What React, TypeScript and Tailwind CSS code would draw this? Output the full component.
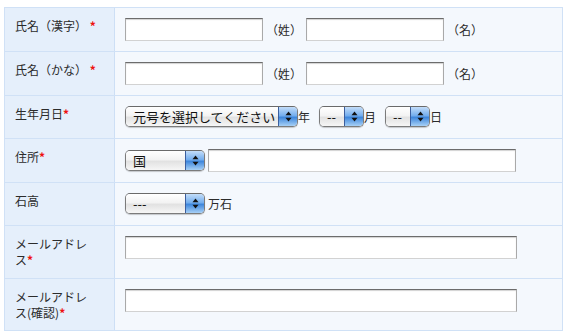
import type { ReactNode } from "react"

function Req() {
  return <span className="font-bold text-[#ee1111]">*</span>
}

function TextBox({ w }: { w: string }) {
  return (
    <input
      type="text"
      className={`${w} h-[23px] border border-[#a9a9a9] border-t-[#6c6c6c] border-b-[#d2d2d2] bg-white shadow-[inset_0_1px_1px_rgba(0,0,0,0.18)] outline-none`}
    />
  )
}

function MacSelect({ text, w }: { text: string; w: string }) {
  return (
    <div
      className={`${w} h-[21px] flex rounded-[5px] border border-[#7b7b7b] border-t-[#6a6a6a] overflow-hidden shadow-[0_1px_1px_rgba(0,0,0,0.2)]`}
    >
      <div className="flex-1 flex items-center pl-[7px] text-[13px] leading-none text-[#111] whitespace-nowrap overflow-hidden bg-[linear-gradient(to_bottom,#ffffff_0%,#f3f3f3_45%,#e2e2e2_55%,#f6f6f6_100%)]">
        {text}
      </div>
      <div className="w-[19px] shrink-0 flex items-center justify-center border-l border-[#3b5e9e] bg-[linear-gradient(to_bottom,#c3ddf9_0%,#74aeee_45%,#3f87dc_55%,#a7d0f6_100%)]">
        <svg width="7" height="11" viewBox="0 0 7 11">
          <path d="M3.5 0.5 L6.5 4.2 L0.5 4.2 Z" fill="#111" />
          <path d="M0.5 6.8 L6.5 6.8 L3.5 10.5 Z" fill="#111" />
        </svg>
      </div>
    </div>
  )
}

function Row({ label, h, children }: { label: ReactNode; h: string; children?: ReactNode }) {
  return (
    <div className={`${h} flex border-b border-[#d0e1f6]`}>
      <div className="w-[110px] shrink-0 bg-[#e5effb] border-r border-[#cddff5] pl-[10px] pt-[10px] text-[12px] leading-[16px] text-[#2b2b2b] whitespace-nowrap">
        {label}
      </div>
      <div className="flex-1 bg-[#f4f8fd] pl-[10px] pt-[10px]">
        <div className="flex items-center text-[12px] text-[#2b2b2b]">{children}</div>
      </div>
    </div>
  )
}

export default function App() {
  return (
    <div className="w-[568px] h-[336px] bg-white pt-[7px] pl-[4px] font-['Noto_Sans_CJK_JP',sans-serif]">
      <div className="w-[559px] border-t border-l border-r border-[#d0e1f6]">
        <Row h="h-[44px]" label={<>氏名（漢字） <Req /></>}>
          <TextBox w="w-[138px]" />
          <span className="ml-[3px] w-[40px]">（姓）</span>
          <TextBox w="w-[138px]" />
          <span className="ml-[3px]">（名）</span>
        </Row>
        <Row h="h-[44px]" label={<>氏名（かな） <Req /></>}>
          <TextBox w="w-[138px]" />
          <span className="ml-[3px] w-[40px]">（姓）</span>
          <TextBox w="w-[138px]" />
          <span className="ml-[3px]">（名）</span>
        </Row>
        <Row h="h-[43px]" label={<>生年月日<Req /></>}>
          <MacSelect text="元号を選択してください" w="w-[173px]" />
          <span className="w-[12px]">年</span>
          <div className="ml-[9px]">
            <MacSelect text="--" w="w-[45px]" />
          </div>
          <span className="w-[12px]">月</span>
          <div className="ml-[9px]">
            <MacSelect text="--" w="w-[45px]" />
          </div>
          <span>日</span>
        </Row>
        <Row h="h-[44px]" label={<>住所<Req /></>}>
          <MacSelect text="国" w="w-[80px]" />
          <div className="ml-[3px]">
            <TextBox w="w-[308px]" />
          </div>
        </Row>
        <Row h="h-[43px]" label="石高">
          <MacSelect text="---" w="w-[80px]" />
          <span className="ml-[3px]">万石</span>
        </Row>
        <Row h="h-[53px]" label={<>メールアドレ<br />ス<Req /></>}>
          <TextBox w="w-[392px]" />
        </Row>
        <Row h="h-[52px]" label={<>メールアドレ<br />ス(確認)<Req /></>}>
          <TextBox w="w-[392px]" />
        </Row>
      </div>
    </div>
  )
}
